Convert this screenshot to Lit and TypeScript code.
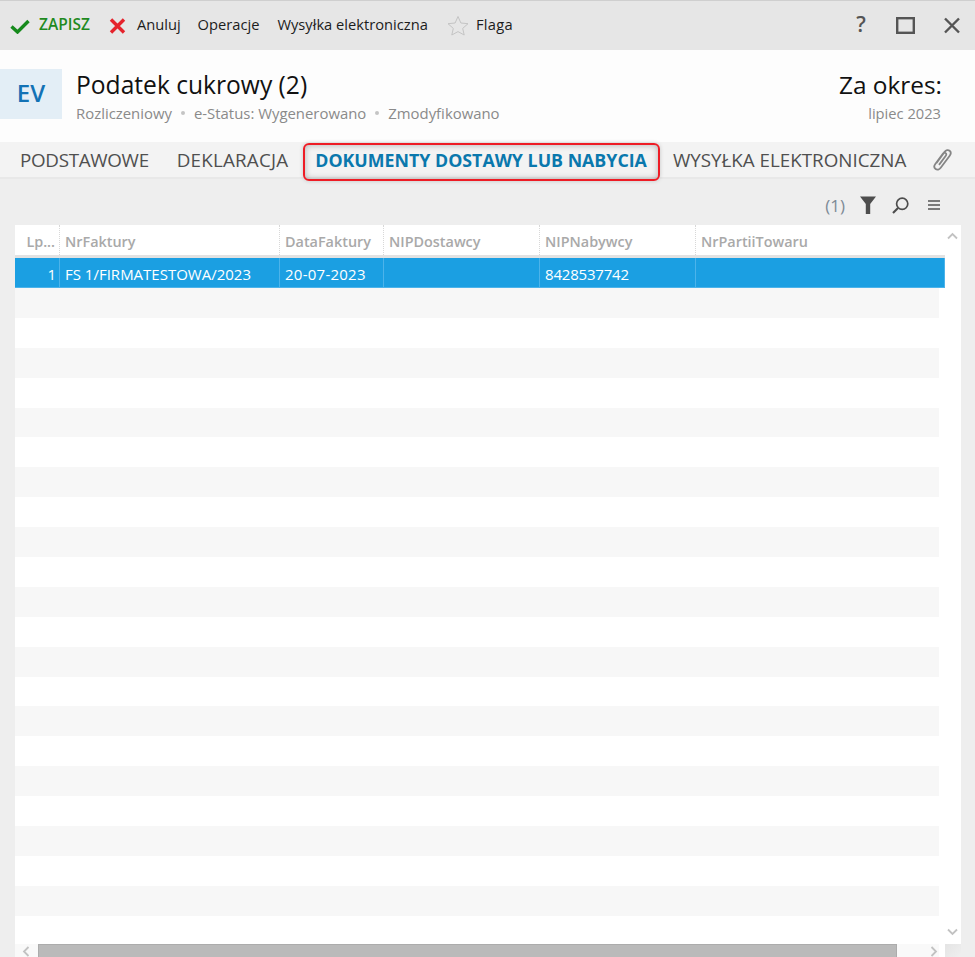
import { LitElement, html, css, svg } from "lit";
import { customElement } from "lit/decorators.js";

const COLS = [
  { name: "Lp...", cls: "c0" },
  { name: "NrFaktury", cls: "c1" },
  { name: "DataFaktury", cls: "c2" },
  { name: "NIPDostawcy", cls: "c3" },
  { name: "NIPNabywcy", cls: "c4" },
  { name: "NrPartiiTowaru", cls: "c5" },
];
const SEL = ["1", "FS 1/FIRMATESTOWA/2023", "20-07-2023", "", "8428537742", ""];

@customElement("app-root")
export class AppRoot extends LitElement {
  static styles = css`
    :host {
      display: block;
      width: 975px;
      height: 957px;
      overflow: hidden;
      background: #eeeeee;
      font-family: "Open Sans", "Noto Sans", sans-serif;
      color: #222;
    }
    .toolbar {
      height: 49px;
      border-top: 1px solid #cfcfcf;
      background: #e6e6e6;
      display: flex;
      align-items: center;
      padding-left: 10px;
      font-size: 14.7px;
      color: #1c1c1c;
    }
    .toolbar span { white-space: nowrap; position: relative; top: -2px; }
    .save { color: #1f8a1f; font-weight: 600; font-size: 15.5px; margin-left: 9px; }
    .x-icon { margin-left: 19px; }
    .cancel { margin-left: 11px; }
    .ops { margin-left: 17px; }
    .send { margin-left: 18px; }
    .star { margin-left: 19px; }
    .flag { margin-left: 7px; letter-spacing: 0.3px; }
    .winbtns { margin-left: auto; display: flex; align-items: center; gap: 28px; padding-right: 14px; }
    .toolbar .help { font-size: 21px; color: #555; font-weight: 600; width: 14px; text-align: center; }
    .hdr {
      height: 92px;
      background: #fdfdfd;
      display: flex;
      box-sizing: border-box;
      padding-top: 19px;
    }
    .ev {
      width: 62px;
      height: 50px;
      box-sizing: border-box;
      padding-bottom: 3px;
      background: #e3eef6;
      color: #1272b5;
      font-size: 24px;
      font-weight: 600;
      display: flex;
      align-items: center;
      justify-content: center;
      flex: none;
    }
    .titles { margin-left: 14px; flex: 1; }
    .title { font-size: 24.6px; line-height: 32px; color: #111; }
    .meta {
      font-size: 14.9px;
      line-height: 20px;
      color: #8a8a8a;
      margin-top: 2px;
      display: flex;
      align-items: center;
      white-space: nowrap;
    }
    .dot { width: 4px; height: 4px; border-radius: 50%; background: #c4c4c4; margin: 0 9px; }
    .period { text-align: right; padding-right: 33px; }
    .period .big { font-size: 24.4px; line-height: 32px; color: #111; }
    .period .small { font-size: 14.7px; line-height: 20px; color: #8a8a8a; margin: 2px 1px 0 0; }
    .tabs {
      height: 35px;
      background: #f3f3f3;
      border-bottom: 2px solid #e8e8e8;
      display: flex;
      align-items: center;
      font-size: 18.8px;
      color: #4f4f4f;
      padding-left: 20px;
      white-space: nowrap;
    }
    .t1 { letter-spacing: -0.3px; }
    .t2 { margin-left: 28px; letter-spacing: 0.2px; }
    .active {
      position: relative;
      margin-left: 27px;
      color: #0a78ad;
      font-weight: 700;
      font-size: 17.8px;
    }
    .active::after {
      content: "";
      position: absolute;
      left: -12px;
      right: -13px;
      top: -5px;
      bottom: -9px;
      border: 2px solid #ee1c25;
      border-radius: 6px;
      box-shadow: inset 0 0 6px rgba(0, 0, 0, 0.28), 0 0 4px rgba(0, 0, 0, 0.18);
    }
    .t4 { margin-left: 26px; }
    .clip { margin-left: 24px; }
    .tools {
      height: 46px;
      box-sizing: border-box;
      padding: 6px 35px 0 0;
      display: flex;
      align-items: center;
      justify-content: flex-end;
      color: #7d8a96;
      font-size: 17px;
    }
    .fn { margin-left: 15px; }
    .mag { margin-left: 16px; }
    .ham { margin-left: 19px; }
    .gridwrap {
      margin-left: 15px;
      width: 946px;
      height: 732px;
      background: #fff;
      position: relative;
      overflow: hidden;
    }
    .head {
      width: 930px;
      height: 30px;
      border-bottom: 3px solid #e2e2e2;
      display: flex;
      font-size: 14.4px;
      color: #a9a9a9;
      font-weight: 600;
    }
    .head .cell {
      line-height: 33px;
      border-right: 1px dotted #d8d8d8;
    }
    .cell { box-sizing: border-box; padding: 0 5px; overflow: hidden; white-space: nowrap; flex: none; }
    .c0 { width: 45px; text-align: right; padding-right: 4px; padding-left: 0; }
    .c1 { width: 220px; }
    .c2 { width: 104px; }
    .c3 { width: 156px; }
    .c4 { width: 156px; }
    .c5 { width: 249px; }
    .head .c5, .sel .c5 { border-right: none; }
    .sel {
      width: 930px;
      height: 30px;
      box-sizing: border-box;
      background: #1b9fe2;
      border-bottom: 1px solid #4cb3ea;
      display: flex;
      font-size: 15px;
      color: #fff;
      line-height: 32px;
    }
    .sel .cell { border-right: 1px solid #4cb3ea; }
    .sel .c0 { padding-right: 3px; }
    .sel .c2 { letter-spacing: 0.25px; }
    .sel .c4 { letter-spacing: -0.2px; }
    .row { width: 924px; height: 29.9px; }
    .row.odd { background: #f7f7f7; }
    .vbar { position: absolute; right: 0; top: 0; bottom: 0; width: 16px; }
    .up { position: absolute; left: 2px; top: 7px; }
    .down { position: absolute; left: 2px; top: 703px; }
    .hbar {
      position: absolute;
      left: 0;
      bottom: 0;
      width: 924px;
      height: 13px;
      background: #f9f9f9;
    }
    .thumb {
      position: absolute;
      left: 23px;
      top: 0;
      width: 859px;
      height: 13px;
      box-sizing: border-box;
      background: #bababa;
      border: 1px solid #acacac;
      border-bottom: none;
    }
    .lft { position: absolute; left: 7px; top: 2px; }
    .rgt { position: absolute; left: 915px; top: 2px; }
    .corner {
      position: absolute;
      right: 0;
      bottom: 0;
      width: 16px;
      height: 13px;
      background: linear-gradient(135deg, #e4e4e4, #efefef);
    }
  `;

  private ico(w: number, h: number, body: unknown, cls = "") {
    return html`<svg class=${cls} width=${w} height=${h} viewBox="0 0 ${w} ${h}" fill="none">${body}</svg>`;
  }

  render() {
    const rows = Array.from({ length: 23 }, (_, i) => i);
    return html`
      <div class="toolbar">
        ${this.ico(20, 16, svg`<path d="M1.5 8.5 L7.5 14 L18.5 3" stroke="#168a1c" stroke-width="3.4"/>`)}
        <span class="save">ZAPISZ</span>
        ${this.ico(17, 16, svg`<path d="M2 1.5 L15 14.5 M15 1.5 L2 14.5" stroke="#e5232c" stroke-width="3.4"/>`, "x-icon")}
        <span class="cancel">Anuluj</span>
        <span class="ops">Operacje</span>
        <span class="send">Wysyłka elektroniczna</span>
        ${this.ico(22, 21, svg`<path d="M11 1.5 L13.9 8 L21 8.7 L15.7 13.4 L17.2 20 L11 16.6 L4.8 20 L6.3 13.4 L1 8.7 L8.1 8 Z" stroke="#c4c4c4" stroke-width="1"/>`, "star")}
        <span class="flag">Flaga</span>
        <div class="winbtns">
          <span class="help">?</span>
          ${this.ico(19, 17, svg`<rect x="1.2" y="1.2" width="16.6" height="14.6" stroke="#555" stroke-width="2.4"/>`)}
          ${this.ico(18, 17, svg`<path d="M2 1.5 L16 15.5 M16 1.5 L2 15.5" stroke="#555" stroke-width="2.4"/>`)}
        </div>
      </div>
      <div class="hdr">
        <div class="ev">EV</div>
        <div class="titles">
          <div class="title">Podatek cukrowy (2)</div>
          <div class="meta">
            <span>Rozliczeniowy</span><i class="dot"></i><span>e-Status: Wygenerowano</span><i class="dot"></i><span>Zmodyfikowano</span>
          </div>
        </div>
        <div class="period">
          <div class="big">Za okres:</div>
          <div class="small">lipiec 2023</div>
        </div>
      </div>
      <div class="tabs">
        <span class="t1">PODSTAWOWE</span>
        <span class="t2">DEKLARACJA</span>
        <span class="active">DOKUMENTY DOSTAWY LUB NABYCIA</span>
        <span class="t4">WYSYŁKA ELEKTRONICZNA</span>
        ${this.ico(22, 24, svg`<path d="M6.5 15 L14.6 3.9 C16 2 18.2 1.7 19.6 2.8 C21 3.9 21 5.9 19.7 7.7 L10.7 19.8 C9.4 21.6 7.2 22.2 5.6 21 C4 19.8 4.1 17.6 5.3 16 L13 5.6 C13.7 4.7 14.9 4.5 15.7 5.1 C16.5 5.7 16.5 6.8 15.8 7.7 L9 16.9" stroke="#858585" stroke-width="1.8"/>`, "clip")}
      </div>
      <div class="tools">
        <span>(1)</span>
        ${this.ico(16, 18, svg`<path d="M0 0.5 H16 L10.2 8 V18 H5.8 V8 Z" fill="#4d4d4d"/>`, "fn")}
        ${this.ico(17, 17, svg`<circle cx="10.2" cy="6.8" r="5.6" stroke="#4d4d4d" stroke-width="1.7"/><path d="M6 11 L1 16" stroke="#4d4d4d" stroke-width="2.2"/>`, "mag")}
        ${this.ico(12, 10, svg`<path d="M0 1 H12 M0 5 H12 M0 9 H12" stroke="#555" stroke-width="1.3"/>`, "ham")}
      </div>
      <div class="gridwrap">
        <div class="head">
          ${COLS.map((c) => html`<div class="cell ${c.cls}">${c.name}</div>`)}
        </div>
        <div class="sel">
          ${SEL.map((v, i) => html`<div class="cell ${COLS[i].cls}">${v}</div>`)}
        </div>
        ${rows.map((i) => html`<div class="row ${i % 2 === 0 ? "odd" : ""}"></div>`)}
        <div class="vbar">
          ${this.ico(11, 8, svg`<path d="M1 6.5 L5.5 2 L10 6.5" stroke="#c2c2c2" stroke-width="1.8"/>`, "up")}
          ${this.ico(11, 8, svg`<path d="M1 1.5 L5.5 6 L10 1.5" stroke="#c2c2c2" stroke-width="1.8"/>`, "down")}
        </div>
        <div class="hbar">
          ${this.ico(8, 11, svg`<path d="M6.5 1 L2 5.5 L6.5 10" stroke="#c2c2c2" stroke-width="1.8"/>`, "lft")}
          <div class="thumb"></div>
          ${this.ico(8, 11, svg`<path d="M1.5 1 L6 5.5 L1.5 10" stroke="#c2c2c2" stroke-width="1.8"/>`, "rgt")}
        </div>
        <div class="corner"></div>
      </div>
    `;
  }
}
